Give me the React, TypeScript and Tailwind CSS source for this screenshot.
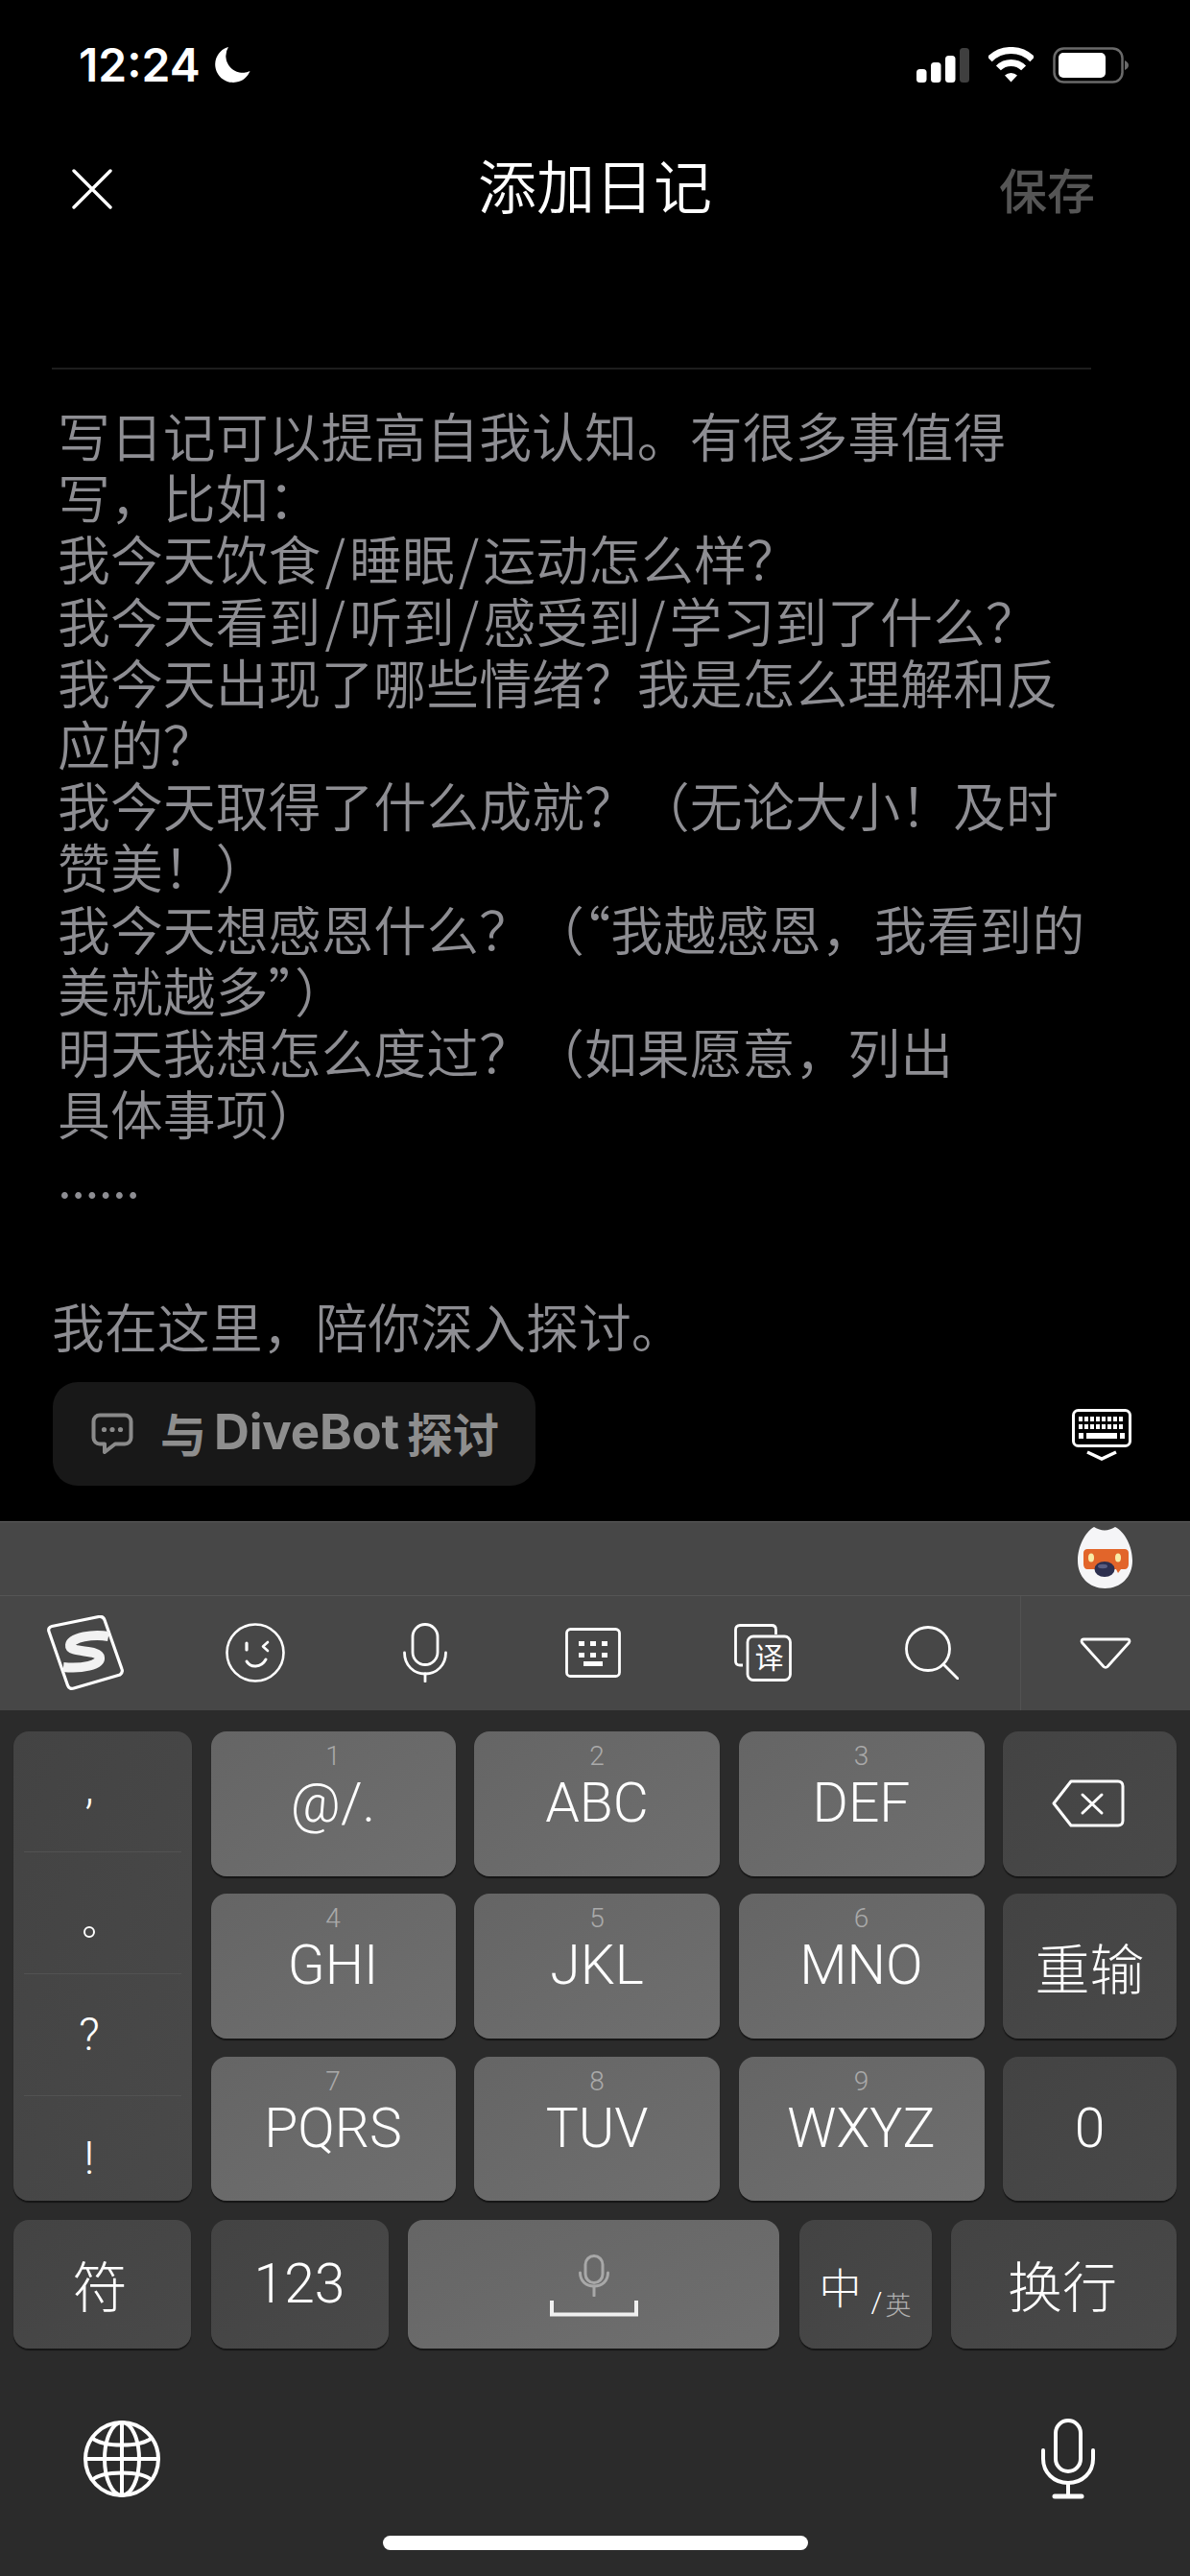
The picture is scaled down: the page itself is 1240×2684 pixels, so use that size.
const CJK = "font-['Noto_Sans_CJK_SC',sans-serif]";

const journalLines = [
  "写日记可以提高自我认知。有很多事值得",
  "写，比如：",
  "我今天饮食/睡眠/运动怎么样？",
  "我今天看到/听到/感受到/学习到了什么？",
  "我今天出现了哪些情绪？我是怎么理解和反",
  "应的？",
  "我今天取得了什么成就？（无论大小！及时",
  "赞美！）",
  "我今天想感恩什么？（“我越感恩，我看到的",
  "美就越多”）",
  "明天我想怎么度过？（如果愿意，列出",
  "具体事项）",
];

// the slash sits wider in the reference than the font's own advance
function JournalLine({ text }: { text: string }) {
  const parts = text.split("/");
  return (
    <div>
      {parts.map((part, i) => (
        <span key={i}>
          {i > 0 && <span className="px-[4px]">/</span>}
          {part}
        </span>
      ))}
    </div>
  );
}

function StatusBar() {
  return (
    <div className="h-[134px] pt-[45px] pl-[82px] pr-[64px] flex justify-between items-start">
      <div className="flex items-center h-[45px]">
        <span className="font-['Inter',sans-serif] text-[48px] leading-[45px] font-semibold text-white">12:24</span>
        <svg width="37" height="38" viewBox="0 0 37 38" className="ml-[15px]">
          <path d="M14 0A18.8 18.8 0 1 0 36.5 25A17.5 17.5 0 0 1 14 0Z" fill="#fff" />
        </svg>
      </div>
      <div className="flex items-center h-[45px]">
        {/* signal */}
        <svg width="55" height="36" viewBox="0 0 55 36">
          <rect x="0" y="22" width="10.5" height="14" rx="3.5" fill="#fff" />
          <rect x="15" y="15" width="10.5" height="21" rx="3.5" fill="#fff" />
          <rect x="30" y="8" width="10.5" height="28" rx="3.5" fill="#fff" />
          <rect x="45" y="0" width="10" height="36" rx="3.5" fill="#3f3f3f" />
        </svg>
        <svg width="47" height="37" viewBox="0 0 47 37" className="ml-[20px]" fill="none">
          <path d="M1.2 12.7A31.5 31.5 0 0 1 45.8 12.7" stroke="#fff" strokeWidth="7" />
          <path d="M10.4 21.9A18.5 18.5 0 0 1 36.6 21.9" stroke="#fff" strokeWidth="7" />
          <path d="M23.5 36.5L17 29.5A9.5 9.5 0 0 1 30 29.5Z" fill="#fff" />
        </svg>
        <svg width="79" height="38" viewBox="0 0 79 38" className="ml-[20px]" fill="none">
          <rect x="1.5" y="1.5" width="71" height="35" rx="10" stroke="#6a6a6a" strokeWidth="2.5" />
          <rect x="6" y="6" width="49" height="26" rx="5" fill="#fff" />
          <path d="M75 14C77.5 15 79 17 79 19C79 21 77.5 23 75 24Z" fill="#6a6a6a" />
        </svg>
      </div>
    </div>
  );
}

function Header() {
  return (
    <div className="h-[122px] pl-[75px] pr-[99px] flex items-center">
      <div className="flex-1">
        <svg width="42" height="42" viewBox="0 0 42 42" className="mt-[4px]">
          <path d="M2 2L40 40M40 2L2 40" stroke="#fff" strokeWidth="3.4" strokeLinecap="round" />
        </svg>
      </div>
      <span className={`${CJK} text-[61px] leading-[70px] font-[350] text-white mb-[6px] ml-[24px]`}>添加日记</span>
      <div className="flex-1 flex justify-end">
        <span className={`${CJK} text-[50px] leading-[60px] font-medium text-[#555555] mt-[2px]`}>保存</span>
      </div>
    </div>
  );
}

function ChatIcon() {
  return (
    <svg width="44" height="44" viewBox="0 0 44 44" fill="none">
      <path d="M9 2.5H35A6.5 6.5 0 0 1 41.5 9V26A6.5 6.5 0 0 1 35 32.5H25L14 41V32.5H9A6.5 6.5 0 0 1 2.5 26V9A6.5 6.5 0 0 1 9 2.5Z" stroke="#8a8a8a" strokeWidth="4" strokeLinejoin="round" />
      <circle cx="13.5" cy="17.5" r="2.6" fill="#8a8a8a" />
      <circle cx="22" cy="17.5" r="2.6" fill="#8a8a8a" />
      <circle cx="30.5" cy="17.5" r="2.6" fill="#8a8a8a" />
    </svg>
  );
}

function HideKeyboardIcon() {
  const rows = [8, 16];
  return (
    <svg width="62" height="54" viewBox="0 0 62 54" fill="none">
      <rect x="1.5" y="1.5" width="59" height="37" rx="5" fill="#000" stroke="#fff" strokeWidth="3" />
      {rows.map((y) =>
        [7, 13, 19, 25, 31, 37, 43, 49].map((x) => <rect key={`${x}-${y}`} x={x} y={y} width="4" height="5" fill="#fff" />),
      )}
      <rect x="7" y="25" width="5" height="6" fill="#fff" />
      <rect x="15" y="25" width="32" height="6" fill="#fff" />
      <rect x="50" y="25" width="5" height="6" fill="#fff" />
      <path d="M16 46L31 53L46 46" stroke="#fff" strokeWidth="3.5" transform="translate(0 -1)" />
    </svg>
  );
}

function Mascot() {
  return (
    <svg width="58" height="65" viewBox="0 0 58 65">
      <path d="M17 0C21 2 24 3.5 28 3.5C32 3.5 35 2 39 0C49 5 57 20 57 35C57 52 45 64 28.5 64C12 64 0 52 0 35C0 20 8 5 17 0Z" fill="#f5f5f7" />
      <path d="M6 27C6 24.5 8 23 10 23H49C51 23 53 24.5 53 27V39C53 42 51 44 49 44H45L42 48L40 44H10C8 44 6 42 6 39Z" fill="#e2652a" />
      <ellipse cx="14" cy="32" rx="3" ry="4.5" fill="#f8eca8" />
      <ellipse cx="42" cy="32" rx="3" ry="4.5" fill="#f8eca8" />
      <ellipse cx="28" cy="44" rx="10.5" ry="8" fill="#2c2f4f" />
      <ellipse cx="26" cy="41" rx="5" ry="2.2" fill="#5a5e82" />
    </svg>
  );
}

function LogoIcon() {
  return (
    <svg width="80" height="78" viewBox="0 0 80 78" fill="none">
      <path d="M5 11.5L54 1.5C57 1 59 2 60 5L78 56C79 58.5 78.5 60 76 62L28 76C25 77 22.5 76 21.5 73L2 17C1 14 2.5 12 5 11.5Z" stroke="#fff" strokeWidth="3.2" strokeLinejoin="round" />
      <path d="M64 22C48 19 25 23 24 31C23 40 54 35 55 44C56 52 36 56 17 54" stroke="#f2f2f2" strokeWidth="10" />
    </svg>
  );
}

function SmileIcon() {
  return (
    <svg width="62" height="62" viewBox="0 0 62 62" fill="none" stroke="#fff" strokeWidth="2.6" strokeLinecap="round" strokeLinejoin="round">
      <circle cx="31" cy="31" r="29.5" />
      <path d="M22 21V28" strokeWidth="3.2" />
      <path d="M44 20L39 24.5L44 29" />
      <path d="M22 40C26 47 37 47 42 38" strokeWidth="3" />
    </svg>
  );
}

function SmallMic() {
  return (
    <svg width="46" height="62" viewBox="0 0 46 62" fill="none" stroke="#fff" strokeWidth="2.8" strokeLinecap="round">
      <rect x="10" y="1.5" width="26" height="42" rx="13" />
      <path d="M1.5 31C1.5 44 11 53 23 53C35 53 44.5 44 44.5 31" />
      <path d="M23 53V61" />
    </svg>
  );
}

function KeyboardBoxIcon() {
  return (
    <svg width="58" height="52" viewBox="0 0 58 52" fill="none">
      <rect x="1.5" y="1.5" width="55" height="49" rx="4" stroke="#fff" strokeWidth="2.8" />
      {[14, 26].map((y) =>
        [14, 26, 38].map((x) => <rect key={`${x}-${y}`} x={x} y={y} width="6" height="5" fill="#fff" />),
      )}
      <rect x="19" y="35" width="20" height="5" fill="#fff" />
    </svg>
  );
}

function TranslateIcon() {
  return (
    <svg width="60" height="60" viewBox="0 0 60 60" fill="none">
      <path d="M9 43H6C3 43 1.5 41.5 1.5 39V6C1.5 3 3 1.5 6 1.5H39C42 1.5 43.5 3 43.5 6V11" stroke="#fff" strokeWidth="2.8" />
      <rect x="14" y="13" width="44.5" height="45.5" rx="6" stroke="#fff" strokeWidth="2.8" />
      <text x="36.5" y="46" textAnchor="middle" fontSize="30" fill="#fff" fontFamily="'Noto Sans CJK SC',sans-serif">译</text>
    </svg>
  );
}

function SearchIcon() {
  return (
    <svg width="56" height="56" viewBox="0 0 56 56" fill="none" stroke="#fff" strokeWidth="2.8" strokeLinecap="round">
      <circle cx="24" cy="24" r="22.5" />
      <path d="M40 40L55 55" />
    </svg>
  );
}

function TriangleIcon() {
  return (
    <svg width="54" height="33" viewBox="0 0 54 33" fill="none">
      <path d="M4 2H50C52 2 52.5 4 51.5 5.5L29 30.5C28 31.5 26 31.5 25 30.5L2.5 5.5C1.5 4 2 2 4 2Z" stroke="#fff" strokeWidth="2.8" strokeLinejoin="round" />
    </svg>
  );
}

function BackspaceIcon() {
  return (
    <svg width="76" height="50" viewBox="0 0 76 50" fill="none" stroke="#fff" strokeWidth="3" strokeLinecap="round" strokeLinejoin="round">
      <path d="M20 2H69C72 2 74 4 74 7V43C74 46 72 48 69 48H20L2 25Z" />
      <path d="M32 16L52 35M52 16L32 35" />
    </svg>
  );
}

function GlobeIcon() {
  return (
    <svg width="80" height="82" viewBox="0 0 80 82" fill="none" stroke="#fff" strokeWidth="4">
      <circle cx="40" cy="41" r="38" />
      <ellipse cx="40" cy="41" rx="18" ry="38" />
      <path d="M40 3V79M2 41H78" />
      <path d="M9 19C20 29 60 29 71 19M9 63C20 53 60 53 71 63" />
    </svg>
  );
}

function BigMic() {
  return (
    <svg width="56" height="84" viewBox="0 0 56 84" fill="none" stroke="#fff" strokeWidth="4" strokeLinecap="round">
      <rect x="15" y="2" width="26" height="53" rx="13" />
      <path d="M2 33V42C2 56 13 67 28 67C43 67 54 56 54 42V33" />
      <path d="M28 67V81" />
      <path d="M14 81H42" strokeWidth="5" />
    </svg>
  );
}

function LetterKey({ digit, label }: { digit: string; label: string }) {
  return (
    <div className="rounded-[16px] bg-gradient-to-br from-[#656565] to-[#6f6f6f] shadow-[0_2px_1px_#161616] flex flex-col items-center pt-[10px]">
      <span className="font-['Roboto',sans-serif] font-light text-[28px] leading-[32px] text-[#aaaaaa]">{digit}</span>
      <span className="font-['Roboto',sans-serif] font-light text-[57px] leading-[66px] text-white">{label}</span>
    </div>
  );
}

function FnKey({ children, className = "" }: { children: React.ReactNode; className?: string }) {
  return (
    <div className={`rounded-[16px] bg-gradient-to-br from-[#434343] to-[#494949] shadow-[0_2px_1px_#161616] flex items-center justify-center text-white font-light ${className}`}>
      {children}
    </div>
  );
}

function Keyboard() {
  return (
    <div className="flex-1 bg-[#2b2b2b] flex flex-col">
      <div className="bg-[#474747] border-t border-[#5c5c5c]">
        <div className="h-[77px] pr-[59px] flex items-center justify-end border-b border-[#555555]">
          <Mascot />
        </div>
        <div className="h-[119px] grid grid-cols-7 items-stretch">
          <div className="flex items-center justify-center"><LogoIcon /></div>
          <div className="flex items-center justify-center"><SmileIcon /></div>
          <div className="flex items-center justify-center"><SmallMic /></div>
          <div className="flex items-center justify-center pr-[3px]"><KeyboardBoxIcon /></div>
          <div className="flex items-center justify-center pr-[5px]"><TranslateIcon /></div>
          <div className="flex items-center justify-center pr-[6px]"><SearchIcon /></div>
          <div className="flex items-center justify-center border-l border-[#525252]"><TriangleIcon /></div>
        </div>
      </div>

      <div className="mt-[22px] pl-[14px] grid grid-cols-[186px_255px_256px_256px_181px] grid-rows-[151px_151px_150px] gap-x-[19.5px] gap-y-[18.5px]">
        {/* punctuation column */}
        <div className="row-span-3 rounded-[16px] bg-gradient-to-br from-[#434343] to-[#494949] shadow-[0_2px_1px_#161616] flex flex-col px-[11px] text-white font-['Roboto',sans-serif] font-light">
          <div className="h-[126px] flex items-center justify-center border-b border-[#525252] text-[48px] leading-[48px] pb-[8px] pr-[28px]">,</div>
          <div className="h-[127px] flex items-center justify-center border-b border-[#525252] pr-[28px]">
            <span className="block w-[12px] h-[12px] mt-[40px] rounded-full border-[2px] border-white" />
          </div>
          <div className="h-[127px] flex items-center justify-center border-b border-[#525252] text-[48px] leading-[48px] pr-[28px]">?</div>
          <div className="flex-1 flex items-center justify-center text-[48px] leading-[48px] pt-[22px] pr-[28px]">!</div>
        </div>

        <LetterKey digit="1" label="@/." />
        <LetterKey digit="2" label="ABC" />
        <LetterKey digit="3" label="DEF" />
        <FnKey className="pr-[3px]"><BackspaceIcon /></FnKey>

        <LetterKey digit="4" label="GHI" />
        <LetterKey digit="5" label="JKL" />
        <LetterKey digit="6" label="MNO" />
        <FnKey className={`${CJK} text-[57px]`}>重输</FnKey>

        <LetterKey digit="7" label="PQRS" />
        <LetterKey digit="8" label="TUV" />
        <LetterKey digit="9" label="WXYZ" />
        <FnKey className="font-['Roboto',sans-serif] text-[57px]">0</FnKey>
      </div>

      <div className="mt-[20px] pl-[14px] h-[134px] flex gap-x-[20.5px]">
        <FnKey className={`${CJK} w-[185px] text-[57px] pr-[5px]`}>符</FnKey>
        <FnKey className="font-['Roboto',sans-serif] w-[185px] text-[57px]">123</FnKey>
        <div className="w-[387px] rounded-[16px] bg-gradient-to-br from-[#656565] to-[#6f6f6f] shadow-[0_2px_1px_#161616] flex flex-col items-center pt-[36px]">
          <svg width="32" height="44" viewBox="0 0 32 44" fill="none" stroke="#a8a8a8" strokeWidth="3" strokeLinecap="round">
            <rect x="7" y="1.5" width="18" height="28" rx="9" />
            <path d="M1.5 19C1.5 28 8 33 16 33C24 33 30.5 28 30.5 19" />
            <path d="M16 33V43" />
          </svg>
          <svg width="92" height="17" viewBox="0 0 92 17" fill="none" className="mt-[4px]">
            <path d="M2 0V14.5H90V0" stroke="#f0f0f0" strokeWidth="4" />
          </svg>
        </div>
        <FnKey className={`${CJK} w-[138px]`}>
          <span className="text-[44px] leading-[50px] mt-[4px]">中</span>
          <span className="font-['Roboto',sans-serif] text-[30px] leading-[30px] text-white ml-[10px] mt-[38px]">/</span>
          <span className="text-[27px] leading-[30px] text-[#b0b0b0] ml-[3px] mt-[42px]">英</span>
        </FnKey>
        <FnKey className={`${CJK} w-[235px] text-[57px] pr-[3px]`}>换行</FnKey>
      </div>

      <div className="mt-[73px] pl-[87px] pr-[99px] flex justify-between items-center">
        <GlobeIcon />
        <BigMic />
      </div>
      <div className="mt-[38px] flex justify-center">
        <div className="w-[443px] h-[15px] rounded-full bg-white" />
      </div>
    </div>
  );
}

export default function App() {
  return (
    <div lang="zh-CN" className="w-[1240px] h-[2684px] bg-black flex flex-col overflow-hidden">
      <StatusBar />
      <Header />
      <div className="mt-[127px] ml-[54px] w-[1083px] h-[2px] bg-[#1d1d1d]" />

      <div className={`${CJK} font-[350] text-[54.9px] leading-[64.2px] text-[#8e8e93] mt-[35px] pl-[60px] whitespace-nowrap`}>
        {journalLines.map((line) => (
          <JournalLine key={line} text={line} />
        ))}
        <div className="tracking-[-0.5px] mt-[2px]">......</div>
      </div>

      <div className={`${CJK} font-[350] text-[54.9px] leading-[64px] text-[#8e8e93] mt-[91px] pl-[54px]`}>我在这里，陪你深入探讨。</div>

      <div className="mt-[28px] pl-[55px] pr-[61px] flex items-start justify-between">
        <div className="w-[503px] h-[108px] rounded-[26px] bg-[#181818] flex items-center pl-[40px]">
          <ChatIcon />
          <span className={`ml-[28px] mb-[3px] ${CJK} font-semibold text-[48px] leading-[56px] text-[#8e8e8e] whitespace-nowrap flex items-center`}>
            与
            <span className="ml-[8px] font-['Inter',sans-serif] font-bold text-[51px] tracking-[-0.2px]">DiveBot</span>
            <span className="ml-[8px]">探讨</span>
          </span>
        </div>
        <div className="mt-[28px]"><HideKeyboardIcon /></div>
      </div>

      <div className="mt-[37px] flex-1 flex flex-col">
        <Keyboard />
      </div>
    </div>
  );
}
